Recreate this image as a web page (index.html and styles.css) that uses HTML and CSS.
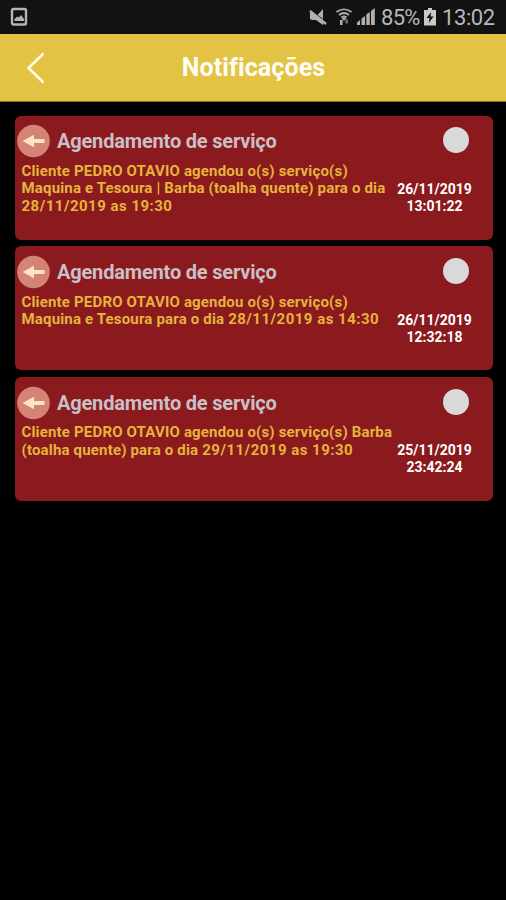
FILE: index.html
```
<!DOCTYPE html>
<html lang="pt-br">
<head>
	<meta charset="utf-8">
	<meta name="viewport" content="width=device-width,initial-scale=1.0">
	<title>Notificações</title>
	<link rel="stylesheet" href="styles.css">
</head>
<body>
	<!-- Barra de status -->
	<div class="status">
		<svg class="foto" width="18" height="20" viewBox="0 0 18 20">
			<rect x="2" y="2" width="14" height="15.5" rx="1.5" fill="none" stroke="#b4b4b4" stroke-width="2.4"/>
			<path d="M4.500 14v-2l3-2.500 1.500 1 2-2.500 3 4v2z" fill="#b4b4b4"/>
		</svg>
		<div class="icones">
			<svg class="mudo" width="18" height="18" viewBox="0 0 18 18">
				<path d="M1 5h4l3 2.500L14 1v16L7 12H3L1 11z" fill="#b0b0b0"/>
				<path d="M1 1.500L18 14.500" stroke="#121212" stroke-width="1"/>
				<path d="M1 3L17 16" stroke="#b0b0b0" stroke-width="2.400"/>
			</svg>
			<svg class="wifi" width="18" height="18" viewBox="0 0 18 18">
				<g fill="none" stroke="#b0b0b0" stroke-width="1.700">
					<path d="M1.500 4Q9-1.500 16.500 4"/>
					<path d="M4 7Q9 3 14 7"/>
					<path d="M6.500 9.500Q9 7.500 11.500 9.500"/>
				</g>
				<path d="M9 13L6.500 10h5z" fill="#b0b0b0"/>
				<path d="M5 12h2.600v5H5z" fill="#b0b0b0"/>
				<path d="M10.500 11.500h2.400v4h-2.400z" fill="#777"/>
			</svg>
			<svg class="sinal" width="18" height="18" viewBox="0 0 18 18">
				<path d="M0 17v-2.500l3-2.500v5zM4.500 17v-6.500L8 8v9zM9.300 17V6.500l3.500-2.500v13zM14 17V3L17.800 0v17z" fill="#b0b0b0"/>
			</svg>
			<span class="carga">85%</span>
			<svg class="bateria" width="12" height="18" viewBox="0 0 12 18">
				<path d="M4 0h4v2h4v15.500H0V2h4z" fill="#cacaca"/>
				<path d="M7.200 4L2.500 10h3l-.8 5L9.600 8.500H6.500z" fill="#121212"/>
			</svg>
			<span class="hora">13:02</span>
		</div>
	</div>

	<div class="topo">
		<svg class="voltar" width="20" height="34" viewBox="0 0 20 34">
			<path d="M17.500 2.500L2.500 17l15 14.500" fill="none" stroke="#fffbe8" stroke-width="2.600"/>
		</svg>
		<h1>Notificações</h1>
	</div>

	<!-- Lista de notificações -->
	<div class="lista">
		<div class="aviso">
			<div class="cabeca">
				<svg class="seta" width="34" height="34" viewBox="0 0 34 34">
					<circle cx="16.500" cy="17" r="16.300" fill="#d38474"/>
					<path d="M5.500 17l11.500-6.300v4.400h10.500v3.800H17v4.400z" fill="#ffe3c2"/>
				</svg>
				<h2>Agendamento de serviço</h2>
				<span class="bola"></span>
			</div>
			<div class="corpo">
				<p class="texto">Cliente PEDRO OTAVIO agendou o(s) serviço(s)<br>Maquina e Tesoura | Barba (toalha quente) para o dia<br><span class="quando">28/11/2019 as 19:30</span></p>
				<p class="data">26/11/2019<br>13:01:22</p>
			</div>
		</div>
		<div class="aviso">
			<div class="cabeca">
				<svg class="seta" width="34" height="34" viewBox="0 0 34 34">
					<circle cx="16.500" cy="17" r="16.300" fill="#d38474"/>
					<path d="M5.500 17l11.500-6.300v4.400h10.500v3.800H17v4.400z" fill="#ffe3c2"/>
				</svg>
				<h2>Agendamento de serviço</h2>
				<span class="bola"></span>
			</div>
			<div class="corpo">
				<p class="texto">Cliente PEDRO OTAVIO agendou o(s) serviço(s)<br>Maquina e Tesoura para o dia <span class="quando">28/11/2019 as 14:30</span></p>
				<p class="data">26/11/2019<br>12:32:18</p>
			</div>
		</div>
		<div class="aviso">
			<div class="cabeca">
				<svg class="seta" width="34" height="34" viewBox="0 0 34 34">
					<circle cx="16.500" cy="17" r="16.300" fill="#d38474"/>
					<path d="M5.500 17l11.500-6.300v4.400h10.500v3.800H17v4.400z" fill="#ffe3c2"/>
				</svg>
				<h2>Agendamento de serviço</h2>
				<span class="bola"></span>
			</div>
			<div class="corpo">
				<p class="texto">Cliente PEDRO OTAVIO agendou o(s) serviço(s) Barba<br>(toalha quente) para o dia <span class="quando">29/11/2019 as 19:30</span></p>
				<p class="data">25/11/2019<br>23:42:24</p>
			</div>
		</div>
	</div>
</body>
</html>
```
FILE: styles.css
```
* {box-sizing: border-box;}
body {margin: 0; min-height: 900px; background-color: #000; font-family: Roboto, "Liberation Sans", sans-serif;}
h1, h2, p {margin: 0;}
svg {display: block; flex: none;}

/* barra de status */
.status {display: flex; justify-content: space-between; align-items: center; height: 34px; padding: 0 10px; background-color: #121212; color: #b8b8b8;}
.icones {display: flex; align-items: center;}
.wifi {margin-left: 8px;}
.sinal {margin-left: 4px;}
.carga, .hora {padding-top: 1px; font-size: 22px; line-height: 33px; white-space: nowrap;}
.carga {margin-left: 6px; width: 39px; letter-spacing: -0.7px;}
.bateria {margin-left: 4px;}
.hora {margin-left: 6px; width: 54px; letter-spacing: -0.4px;}

.topo {display: grid; grid-template-columns: 60px 1fr 60px; align-items: center; height: 68px; background-color: #e3c344; border-bottom: 1px solid #8d782a;}
.voltar {margin-left: 26px;}
h1 {padding: 1px 0 0 1px; color: #fffdf5; font-size: 25px; font-weight: 700; line-height: 30px; letter-spacing: 0.1px; text-align: center; white-space: nowrap;}

/* tarjetas */
.lista {display: flex; flex-direction: column; gap: 6.8px; padding: 13.5px 13.5px 0 14.5px;}
.aviso {height: 124px; padding: 8px 0 0 2.5px; border-radius: 6px; background-color: #8a1a1d;}
.cabeca {display: flex; align-items: center; height: 35px;}
h2 {margin-left: 6px; color: #c9bfc4; font-size: 20px; font-weight: 700; line-height: 34px; letter-spacing: -0.18px; white-space: nowrap;}
.bola {width: 26px; height: 26px; margin: 0 23.5px 2px auto; border-radius: 50%; background-color: #d9d9d9;}
.corpo {display: flex; justify-content: space-between; padding: 4.4px 20px 0 4.5px;}
.texto {color: #e5b43c; font-size: 15px; font-weight: 700; line-height: 17.5px; letter-spacing: 0.17px; white-space: nowrap;}
.quando {letter-spacing: 0.48px;}
.data {width: 76px; margin-top: 18px; color: #fff; font-size: 14px; font-weight: 700; line-height: 17px; text-align: center; white-space: nowrap;}
```
